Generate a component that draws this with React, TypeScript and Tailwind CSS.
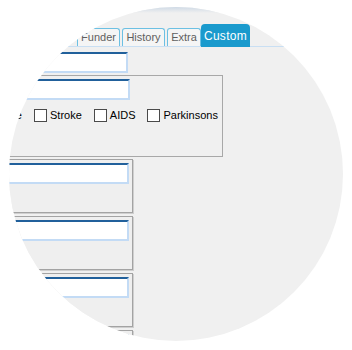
import React from 'react';

const tabs = [
  { label: 'Funder', width: 'w-[43px]' },
  { label: 'History', width: 'w-[43px]' },
  { label: 'Extra', width: 'w-[34px]' },
];

const conditions = ['Stroke', 'AIDS', 'Parkinsons'];

function Field({ className }: { className: string }) {
  return (
    <div
      className={`h-[21px] bg-white border-2 border-[#c3dbf5] border-t-[#21609b] ${className}`}
    />
  );
}

function Panel() {
  return (
    <div className="w-[143px] h-[54px] mb-[3px] border border-[#a3a3a3] shadow-[1px_1px_0_#cfcfcf] bg-[#efefef] pt-[3px]">
      <Field className="w-[138px]" />
    </div>
  );
}

function Check({ label }: { label: string }) {
  return (
    <label className="flex items-center">
      <span className="w-[13px] h-[13px] border border-[#4a4a4a] bg-white" />
      <span className="ml-[3px] leading-[13px]">{label}</span>
    </label>
  );
}

export default function App() {
  return (
    <div
      className="w-[352px] h-[350px] bg-white overflow-hidden"
      style={{ fontFamily: '"Liberation Sans", Arial, sans-serif' }}
    >
      <div className="ml-[9px] mt-[7px] w-[334px] h-[334px] rounded-full overflow-hidden bg-[#f0f0f0]">
        <div className="-ml-[9px] -mt-[7px] w-[352px] h-[350px]">
          {/* window strip above the tabs */}
          <div className="h-[13px] bg-gradient-to-b from-[#a9c1da] to-[#f0f0f0]" />

          {/* tab strip */}
          <div className="h-[34px] flex items-end gap-[2px] pl-[77px] border-b border-[#c9dff3]">
            {tabs.map((t) => (
              <div
                key={t.label}
                className={`${t.width} h-[18px] flex items-center justify-center rounded-t-[3px] border border-b-0 border-[#6cc0e3] bg-[#f5f5f5] text-[11px] text-[#5f5f5f]`}
              >
                {t.label}
              </div>
            ))}
            <div className="w-[49px] h-[23px] -ml-[2px] -mb-[1px] flex items-center justify-center rounded-t-[4px] bg-[#1a9acd] text-[12px] tracking-[0.3px] text-white">
              Custom
            </div>
          </div>

          <div className="-ml-[10px] pt-[5px]">
            <Field className="w-[138px]" />

            {/* conditions group */}
            <div className="mt-[2px] w-[233px] h-[82px] border border-[#a8a8a8] pt-[3px]">
              <Field className="w-[139px]" />
              <div className="mt-[9px] flex items-center gap-[12px] text-[11px] text-black">
                <div className="w-[31px] flex justify-end whitespace-nowrap leading-[13px]">
                  Disease
                </div>
                {conditions.map((c) => (
                  <Check key={c} label={c} />
                ))}
              </div>
            </div>

            <div className="mt-[2px]">
              <Panel />
              <Panel />
              <Panel />
              <Panel />
            </div>
          </div>
        </div>
      </div>
    </div>
  );
}
